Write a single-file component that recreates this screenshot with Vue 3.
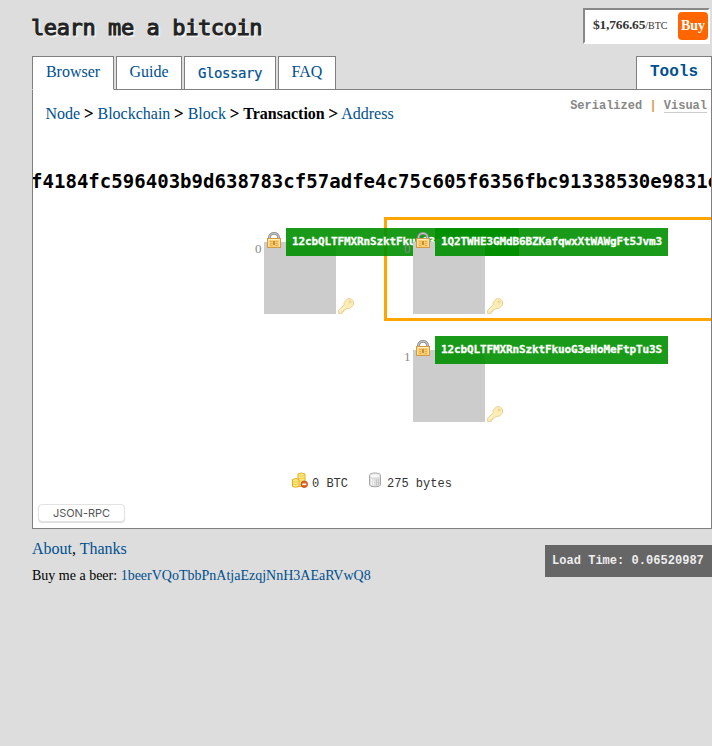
<script setup>
const tabs = [
  { label: 'Browser', cls: 'active' },
  { label: 'Guide', cls: 'guide' },
  { label: 'Glossary', cls: 'glossary' },
  { label: 'FAQ', cls: 'faq' },
]
const nodes = [
  { id: 'in0', index: 0, address: '12cbQLTFMXRnSzktFkuoG3eHoMeFtpTu3S' },
  { id: 'out0', index: 0, address: '1Q2TWHE3GMdB6BZKafqwxXtWAWgFt5Jvm3' },
  { id: 'out1', index: 1, address: '12cbQLTFMXRnSzktFkuoG3eHoMeFtpTu3S' },
]
</script>

<template>
  <div class="page">
    <header class="top">
      <h1>learn me a bitcoin</h1>
      <div class="price"><span><b>$1,766.65</b><small>/BTC</small></span><a class="buy">Buy</a></div>
    </header>
    <nav class="tabs">
      <a v-for="t in tabs" :key="t.label" class="tab" :class="t.cls"><span>{{ t.label }}</span></a>
      <a class="tab tools"><span>Tools</span></a>
    </nav>
    <main class="panel">
      <div class="head">
        <div class="crumbs"><a>Node</a> <i>&gt;</i> <a>Blockchain</a> <i>&gt;</i> <a>Block</a> <i>&gt;</i> <b>Transaction</b> <i>&gt;</i> <a>Address</a></div>
        <div class="views">Serialized <i>|</i> <u>Visual</u></div>
      </div>
      <h2>f4184fc596403b9d638783cf57adfe4c75c605f6356fbc91338530e9831e9e16</h2>
      <div class="canvas">
        <div class="selection"></div>
        <div v-for="n in nodes" :key="n.id" class="node" :class="n.id">
          <div class="box"></div>
          <span class="index">{{ n.index }}</span>
          <span class="address">{{ n.address }}</span>
          <svg class="lock" viewBox="0 0 16 16">
            <path d="M3.5 8V5.3a4.5 3.9 0 0 1 9 0V8" fill="none" stroke="#8c8c8c" stroke-width="2.8" />
            <path d="M3.5 8V5.3a4.5 3.9 0 0 1 9 0V8" fill="none" stroke="#c2c2c2" stroke-width="1.2" />
            <rect x="1.5" y="6.5" width="13" height="9" fill="#fbcf72" stroke="#d29a45" />
            <path d="M2.5 7.5h11" stroke="#fff0bd" />
            <path d="M2.5 8v7M13.5 8v7" stroke="#fde09a" />
            <path d="M4 9.5h2.5M4 11.5h2.5M4 13.5h2.5M9.5 9.5H12M9.5 11.5H12M9.5 13.5H12" stroke="#e9ae4c" />
            <path d="M8 9v4" stroke="#a9742a" stroke-width="1.4" />
          </svg>
          <svg class="key" viewBox="0 0 16 16">
            <path fill-rule="evenodd" d="M6 4.5 9.5.7h3.2L15.5 3v4l-3.7 3.4H8.7L7.5 12H5.8v1.6H4.2v1.8H.6v-3.2L6.2 7ZM11 3.2v1.5h2V3.2Z" fill="#fcedb4" stroke="#e6cd90" stroke-width=".9" />
            <path d="m2 13 6-5" stroke="#fff9d8" />
          </svg>
        </div>
      </div>
      <div class="stats">
        <svg viewBox="0 0 16 16">
          <path d="M6 2v12.5h7V2q-3.5-2-7 0Z" fill="#ffe880" stroke="#dfae25" />
          <path d="M6.5 3.5q3 1.5 6 0M6.5 6q3 1.5 6 0M6.5 8.5q3 1.5 6 0" fill="none" stroke="#efcb4a" />
          <path d="M.5 7.5v7q3 1.5 6.5 0v-7Q4 5.5.5 7.5Z" fill="#ffe880" stroke="#dfae25" />
          <path d="M1 9.5q3 1.5 5.5 0M1 12q3 1.5 5.5 0" fill="none" stroke="#efcb4a" />
          <circle cx="12.3" cy="12.3" r="3.2" fill="#e7642b" stroke="#c4541c" />
          <path d="M10.3 12.3h4" stroke="#fff" stroke-width="1.4" />
        </svg>
        <span>0 BTC</span>
        <svg class="db" viewBox="0 0 16 16">
          <path d="M2.5 3.5v9.3q0 2 5.5 2t5.5-2V3.5q0-2.5-5.5-2.5T2.5 3.5Z" fill="#dedede" stroke="#a5a5a5" />
          <ellipse cx="8" cy="3.9" rx="5" ry="2.2" fill="#f8f8f8" stroke="#cfcfcf" stroke-width=".7" />
          <path d="M4.5 7v6M6.5 7.5v6" stroke="#f5f5f5" />
          <path d="M9.5 7.5v6M11.5 7v6" stroke="#c4c4c4" />
        </svg>
        <span>275 bytes</span>
      </div>
      <button class="rpc">JSON-RPC</button>
    </main>
    <footer>
      <div>
        <p class="about"><a>About</a>, <a>Thanks</a></p>
        <p class="beer">Buy me a beer: <a>1beerVQoTbbPnAtjaEzqjNnH3AEaRVwQ8</a></p>
      </div>
      <div class="load">Load Time: 0.06520987</div>
    </footer>
  </div>
</template>

<style>
body { background: #ddd; overflow: hidden; }
</style>
<style scoped>
* { box-sizing: border-box; }
.page { height: 746px; padding-left: 32px; font: 16px/18px "Liberation Serif", serif; color: #000; overflow: hidden; white-space: nowrap; }
a { color: #00508f; }
p, h1, h2 { margin: 0; }
.top { display: flex; justify-content: space-between; height: 56px; padding: 8px 2px 0 0; }
h1 { margin-left: -1px; padding-top: 7px; font: 400 22px/26px "DejaVu Sans Mono", monospace; letter-spacing: -.4px; color: #222; -webkit-text-stroke: 1px #222; text-shadow: 2px 2px 1px #f5f5f5; }
.price { display: flex; align-items: center; justify-content: space-between; width: 127px; height: 36px; padding: 0 0 2px 8px; background: #fff; border: 2px solid #fff; border-top-color: #888; border-left-color: #888; color: #333; font-size: 14px; }
.price b { font-size: 13.5px; letter-spacing: -.2px; }
.price small { font-size: 10px; }
.buy { width: 30px; height: 28px; margin-top: 2px; border-radius: 4px; background: #f60; color: #fff; font: 700 14px/27px "Liberation Serif", serif; text-align: center; }
.tabs { display: flex; gap: 2px; height: 34px; position: relative; z-index: 1; }
.tab { display: flex; justify-content: center; height: 34px; padding-top: 6px; background: #fff; border: 1px solid #808080; }
.active { width: 82px; border-bottom-color: #fff; }
.guide { width: 66px; }
.glossary { width: 92px; padding-top: 7px; font: 14px/18px "DejaVu Sans Mono", monospace; letter-spacing: -.43px; -webkit-text-stroke: .2px #00508f; }
.faq { width: 58px; }
.tools { width: 76px; margin-left: auto; font: 700 16px/18px "Liberation Mono", monospace; }
.panel { height: 440px; margin-top: -1px; border: 1px solid #808080; background: #fff; overflow: hidden; }
.head { display: flex; justify-content: space-between; height: 74px; padding: 15px 4px 0 12.5px; }
.crumbs i { font-style: normal; -webkit-text-stroke: .5px #000; margin-right: .3px; }
.views { margin-top: -7px; font: 700 12px/16px "Liberation Mono", monospace; color: #888; }
.views i { color: #d99a50; font-style: normal; }
.views u { text-decoration: none; display: inline-block; height: 15px; border-bottom: 1px solid #ccc; }
h2 { margin-left: -2px; font: 700 19px/34px "DejaVu Sans Mono", monospace; letter-spacing: .03px; }
.canvas { position: relative; height: 270px; }
.selection { position: absolute; left: 351px; top: 19px; width: 340px; height: 104px; border: 3px solid orange; }
.node { position: absolute; width: 72px; height: 72px; }
.in0 { left: 231px; top: 44px; }
.out0 { left: 380px; top: 44px; }
.out1 { left: 380px; top: 152px; }
.box { height: 72px; background: #ccc; }
.index { position: absolute; left: -9px; top: -1px; font-size: 13px; line-height: 16px; color: #888; }
.address { position: absolute; left: 22px; top: -14px; width: 233px; height: 28px; padding-left: 6px; background: rgba(0, 143, 0, .9); color: #fff; font: 700 11px/28px "DejaVu Sans Mono", monospace; letter-spacing: -.12px; -webkit-text-stroke: .3px #fff; }
.lock { position: absolute; left: 2px; top: -10px; width: 16px; height: 16px; }
.key { position: absolute; left: 74px; top: 56px; width: 16px; height: 16px; }
.stats { display: flex; align-items: flex-start; height: 36px; padding: 4px 0 0 259px; font: 12px/24px "Liberation Mono", monospace; color: #333; }
.stats svg { width: 16px; height: 16px; margin-right: 4px; }
.stats .db { margin-left: 19px; }
.rpc { display: block; width: 87px; height: 18px; margin: 0 0 0 5px; padding: 0; border: 1px solid #e2e2e2; border-radius: 4px; background: #fff; box-shadow: 0 1px 1px #ddd; color: #555; font: 11px/16px Inter, sans-serif; }
footer { display: flex; justify-content: space-between; padding-top: 11px; }
.beer { margin-top: 9px; font-size: 14px; line-height: 18px; }
.load { width: 167px; height: 32px; margin-top: 5px; padding-left: 7px; background: #666; color: #eee; font: 700 12px/33px "Liberation Mono", monospace; letter-spacing: .03px; }
</style>
